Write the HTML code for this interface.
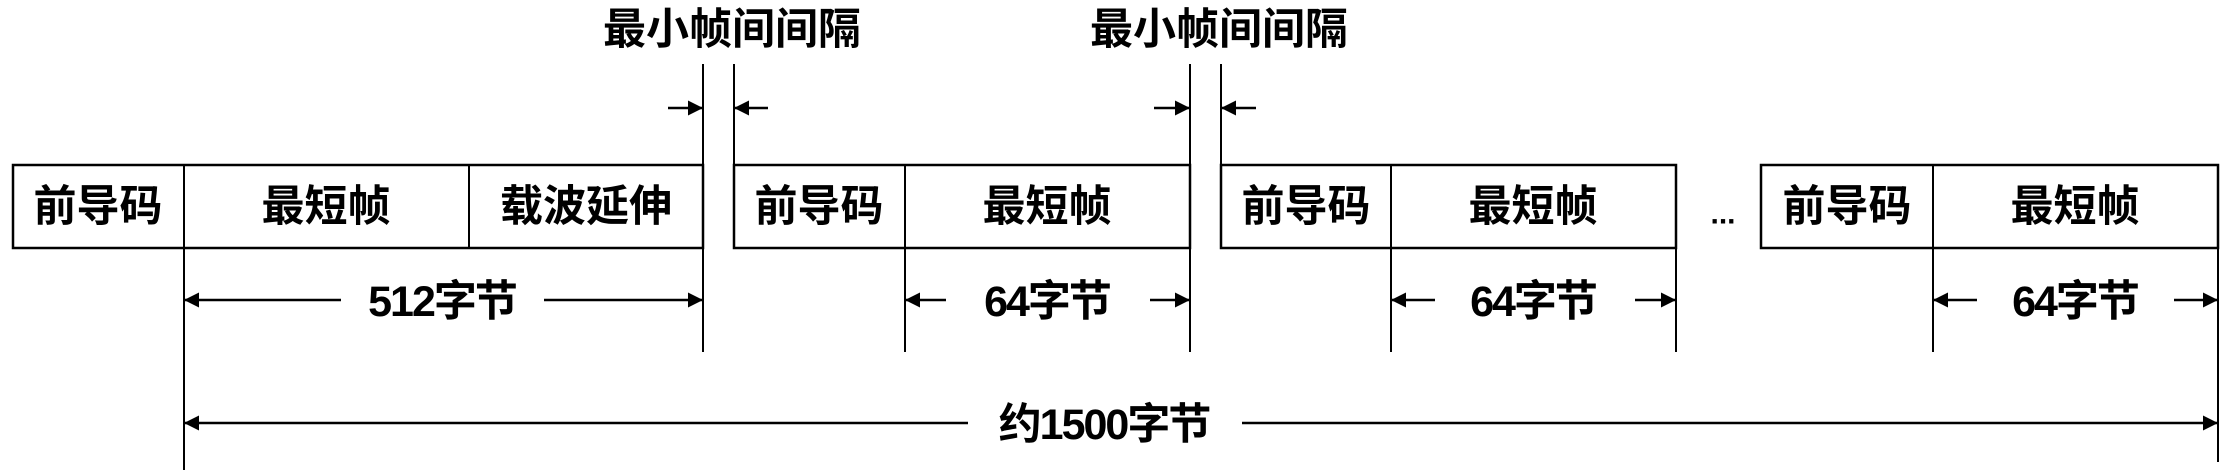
<!DOCTYPE html>
<html><head><meta charset="utf-8"><style>
html,body{margin:0;padding:0;background:#fff;}
svg{display:block;}
text{font-family:"Liberation Sans","Noto Sans CJK SC",sans-serif;font-weight:bold;font-size:43px;fill:#000;text-anchor:middle;dominant-baseline:central;}
.n{letter-spacing:-2px;}
</style></head><body>
<svg width="2230" height="475" viewBox="0 0 2230 475" xmlns="http://www.w3.org/2000/svg">
<defs>
<marker id="a" viewBox="0 0 10 10" refX="10" refY="5" markerWidth="6" markerHeight="6" orient="auto-start-reverse"><path d="M0,0L10,5L0,10z" fill="#000"/></marker>
</defs>
<g stroke="#000" stroke-width="2.5" fill="none">
<rect x="13" y="165" width="690" height="83"/>
<rect x="734" y="165" width="456" height="83"/>
<rect x="1221" y="165" width="455" height="83"/>
<rect x="1761" y="165" width="457" height="83"/>
</g>
<g stroke="#000" stroke-width="2" fill="none">
<line x1="184" y1="165" x2="184" y2="470"/>
<line x1="469" y1="165" x2="469" y2="248"/>
<line x1="703" y1="64" x2="703" y2="352"/>
<line x1="734" y1="64" x2="734" y2="248"/>
<line x1="905" y1="165" x2="905" y2="352"/>
<line x1="1190" y1="64" x2="1190" y2="352"/>
<line x1="1221" y1="64" x2="1221" y2="248"/>
<line x1="1391" y1="165" x2="1391" y2="352"/>
<line x1="1676" y1="165" x2="1676" y2="352"/>
<line x1="1933" y1="165" x2="1933" y2="352"/>
<line x1="2218" y1="165" x2="2218" y2="462"/>
</g>
<g stroke="#000" stroke-width="2.5" fill="none">
<line x1="668" y1="108" x2="703" y2="108" marker-end="url(#a)"/>
<line x1="768" y1="108" x2="734" y2="108" marker-end="url(#a)"/>
<line x1="1154" y1="108" x2="1190" y2="108" marker-end="url(#a)"/>
<line x1="1256" y1="108" x2="1221" y2="108" marker-end="url(#a)"/>
<line x1="341" y1="300" x2="184" y2="300" marker-end="url(#a)"/>
<line x1="544" y1="300" x2="703" y2="300" marker-end="url(#a)"/>
<line x1="946" y1="300" x2="905" y2="300" marker-end="url(#a)"/>
<line x1="1150" y1="300" x2="1190" y2="300" marker-end="url(#a)"/>
<line x1="1435" y1="300" x2="1391" y2="300" marker-end="url(#a)"/>
<line x1="1635" y1="300" x2="1676" y2="300" marker-end="url(#a)"/>
<line x1="1977" y1="300" x2="1933" y2="300" marker-end="url(#a)"/>
<line x1="2174" y1="300" x2="2218" y2="300" marker-end="url(#a)"/>
<line x1="968" y1="423" x2="184" y2="423" marker-end="url(#a)"/>
<line x1="1242" y1="423" x2="2218" y2="423" marker-end="url(#a)"/>
</g>
<text x="732" y="30">最小帧间间隔</text>
<text x="1219" y="30">最小帧间间隔</text>
<text x="98" y="207">前导码</text>
<text x="326" y="207">最短帧</text>
<text x="586" y="207">载波延伸</text>
<text x="819" y="207">前导码</text>
<text x="1047" y="207">最短帧</text>
<text x="1306" y="207">前导码</text>
<text x="1533" y="207">最短帧</text>
<text x="1723" y="214" style="font-size:30px">...</text>
<text x="1847" y="207">前导码</text>
<text x="2075" y="207">最短帧</text>
<text class="n" x="442" y="302">512字节</text>
<text class="n" x="1047" y="302">64字节</text>
<text class="n" x="1533" y="302">64字节</text>
<text class="n" x="2075" y="302">64字节</text>
<text class="n" x="1104" y="425">约1500字节</text>
</svg>
</body></html>
